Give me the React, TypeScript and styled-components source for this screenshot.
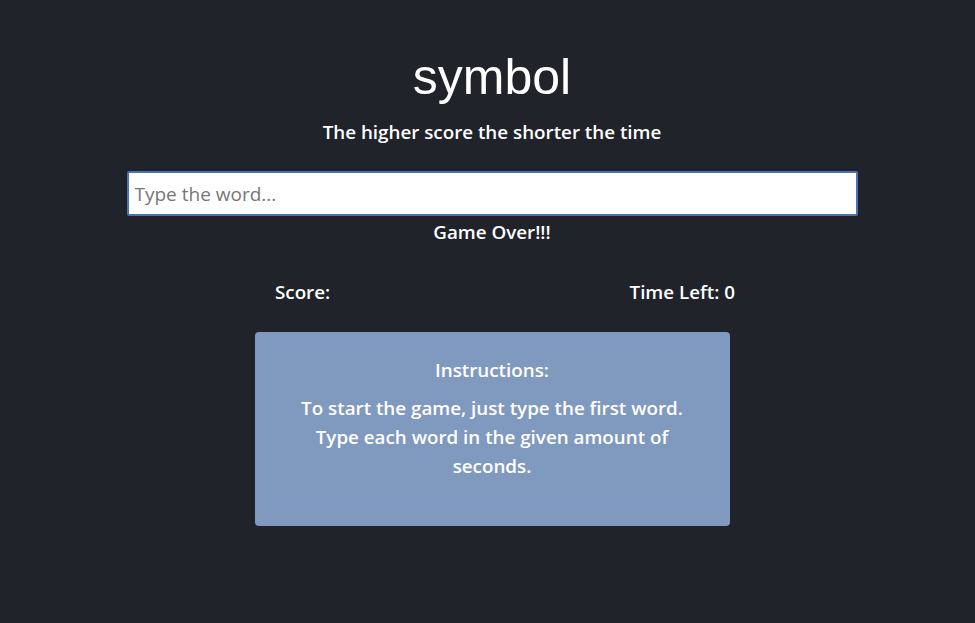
import React from "react";
import styled, { createGlobalStyle } from "styled-components";

const Global = createGlobalStyle`
  html, body { margin: 0; padding: 0; background: #20232a; }
  body { font-family: "Open Sans", "Noto Sans", sans-serif; color: #ffffff; }
  * { box-sizing: border-box; }
`;

const Page = styled.main`
  min-height: 623px;
  display: flex;
  flex-direction: column;
  align-items: center;
  padding-top: 48px;
  padding-left: 9px;
`;

const Title = styled.h1`
  margin: 0;
  font-family: "Liberation Sans", Arial, sans-serif;
  font-weight: 400;
  font-size: 50px;
  line-height: 58px;
`;

const Subtitle = styled.h2`
  margin: 14px 0 0;
  font-size: 18.8px;
  font-weight: 600;
  line-height: 24px;
`;

const WordInput = styled.input`
  margin-top: 27px;
  width: 731px;
  height: 45px;
  border: 2px solid #4a72b8;
  border-radius: 2px;
  padding: 0 6px;
  font-family: "Open Sans", "Noto Sans", sans-serif;
  font-size: 19px;
  color: #222;
  background: #fff;
  outline: none;
  &::placeholder { color: #777; }
`;

const Status = styled.div`
  margin-top: 3px;
  font-size: 18.8px;
  font-weight: 600;
  line-height: 26px;
`;

const StatsRow = styled.div`
  margin-top: 34px;
  width: 460px;
  margin-left: 26px;
  display: flex;
  justify-content: space-between;
  font-size: 18.8px;
  font-weight: 600;
  line-height: 26px;
`;

const Card = styled.section`
  margin-top: 27px;
  width: 475px;
  height: 194px;
  background: #8099be;
  border-radius: 4px;
  padding: 25px 24px;
  text-align: center;
  font-size: 18.8px;
  font-weight: 600;
  line-height: 29px;
`;

const CardHeading = styled.h3`
  margin: 0 0 11px;
  font-size: 18.8px;
  font-weight: 600;
  line-height: 26px;
`;

const CardText = styled.p`
  margin: 0;
`;

export default function App() {
  return (
    <>
      <Global />
      <Page>
        <Title>symbol</Title>
        <Subtitle>The higher score the shorter the time</Subtitle>
        <WordInput type="text" placeholder="Type the word..." autoFocus />
        <Status>Game Over!!!</Status>
        <StatsRow>
          <span>Score: </span>
          <span>Time Left: 0</span>
        </StatsRow>
        <Card>
          <CardHeading>Instructions:</CardHeading>
          <CardText>
            To start the game, just type the first word. Type each word in the given amount of seconds.
          </CardText>
        </Card>
      </Page>
    </>
  );
}
